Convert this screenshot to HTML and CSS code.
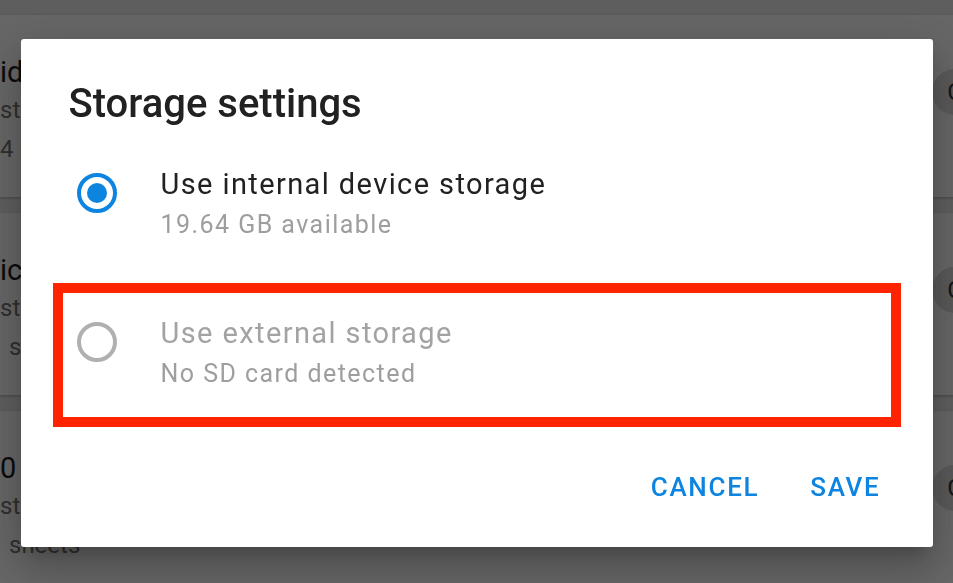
FILE: index.html
```html
<html>
<head>
    <link rel="stylesheet" href="styles.css">
</head>
<body>
<div class="list">
    <div class="card">
        <div class="card_text">
            <div class="card_title">idea board</div>
            <div class="card_line">st edited today</div>
            <div class="card_line">4 pages</div>
        </div>
        <div class="avatar">C</div>
    </div>
    <div class="card">
        <div class="card_text">
            <div class="card_title">ic notes</div>
            <div class="card_line">st edited yesterday</div>
            <div class="card_line indent">s</div>
        </div>
        <div class="avatar">C</div>
    </div>
    <div class="card">
        <div class="card_text">
            <div class="card_title">0 budget</div>
            <div class="card_line">st edited last week</div>
            <div class="card_line indent">sheets</div>
        </div>
        <div class="avatar">C</div>
    </div>
</div>

<div class="scrim">
    <div class="dialog">
        <h1 class="dialog_title">Storage settings</h1>

        <div class="option">
            <span class="radio checked"></span>
            <div class="option_text">
                <div class="option_label">Use internal device storage</div>
                <div class="option_sub">19.64 GB available</div>
            </div>
        </div>

        <div class="option disabled marked">
            <span class="radio"></span>
            <div class="option_text">
                <div class="option_label">Use external storage</div>
                <div class="option_sub">No SD card detected</div>
            </div>
        </div>

        <div class="actions">
            <button class="flat_btn">CANCEL</button>
            <button class="flat_btn">SAVE</button>
        </div>
    </div>
</div>
</body>
</html>
```

FILE: styles.css
```css
body {
    margin:0;
    background:#ebebeb;
    font-family:Roboto, "Noto Sans", sans-serif;
    overflow:hidden;
}

/* page behind the dialog */
.list {
    padding-top:15px;
    margin-right:-25px;
}

.card {
    height:182px;
    box-sizing:border-box;
    background:#fff;
    margin-bottom:16px;
    padding-top:38px;
    display:flex;
    justify-content:space-between;
    align-items:flex-start;
    box-shadow:0 1px 3px rgba(0,0,0,.25);
}

.card_title {
    font-size:29px;
    line-height:38px;
    color:#1c1c1c;
}

.card_line {
    font-size:24px;
    line-height:39px;
    color:#757575;
}

.card_line.indent {
    padding-left:9px;
}

.avatar {
    width:46px;
    height:46px;
    margin-top:16px;
    border-radius:50%;
    background:#dedede;
    color:#333;
    font-size:24px;
    line-height:46px;
    text-align:center;
}

/* dialog */
.scrim {
    position:fixed;
    top:0;
    left:0;
    right:0;
    bottom:0;
    background:rgba(0,0,0,.6);
    display:flex;
    justify-content:center;
    align-items:flex-start;
    padding-top:39px;
}

.dialog {
    width:912px;
    box-sizing:border-box;
    background:#fff;
    border-radius:3px;
    padding:41px 42px 42px;
    box-shadow:0 11px 15px -7px rgba(0,0,0,.2), 0 24px 38px 3px rgba(0,0,0,.14), 0 9px 46px 8px rgba(0,0,0,.12);
}

.dialog_title {
    margin:0 0 16px;
    padding-left:6px;
    font-size:40px;
    line-height:48px;
    font-weight:500;
    color:#212121;
}

.option {
    height:124px;
    box-sizing:border-box;
    padding:21px 0 0 14px;
    display:flex;
    align-items:flex-start;
    gap:44px;
}

.option + .option {
    margin-top:25px;
}

.option.marked {
    outline:10px solid #ff2400;
}

.radio {
    width:40px;
    height:40px;
    box-sizing:border-box;
    margin-top:8px;
    border:4px solid #b0b0b0;
    border-radius:50%;
    display:flex;
    align-items:center;
    justify-content:center;
    flex-shrink:0;
}

.radio.checked {
    border-color:#0d85e0;
}

.radio.checked:after {
    content:'';
    width:20px;
    height:20px;
    border-radius:50%;
    background:#0d85e0;
}

.option_label {
    font-size:29px;
    line-height:38px;
    letter-spacing:1.4px;
    color:#212121;
}

.option_sub {
    margin-top:7px;
    font-size:25px;
    line-height:30px;
    letter-spacing:1.45px;
    color:#9e9e9e;
}

.disabled .option_label {
    color:#a3a3a3;
}

.actions {
    margin-top:52px;
    display:flex;
    justify-content:flex-end;
    gap:29px;
}

.flat_btn {
    background:transparent;
    border:0;
    outline:0;
    padding:0 10px 0 12px;
    font-family:Roboto, "Noto Sans", sans-serif;
    font-size:26px;
    line-height:36px;
    font-weight:500;
    letter-spacing:1.7px;
    color:#0d85e0;
    cursor:pointer;
}
```
